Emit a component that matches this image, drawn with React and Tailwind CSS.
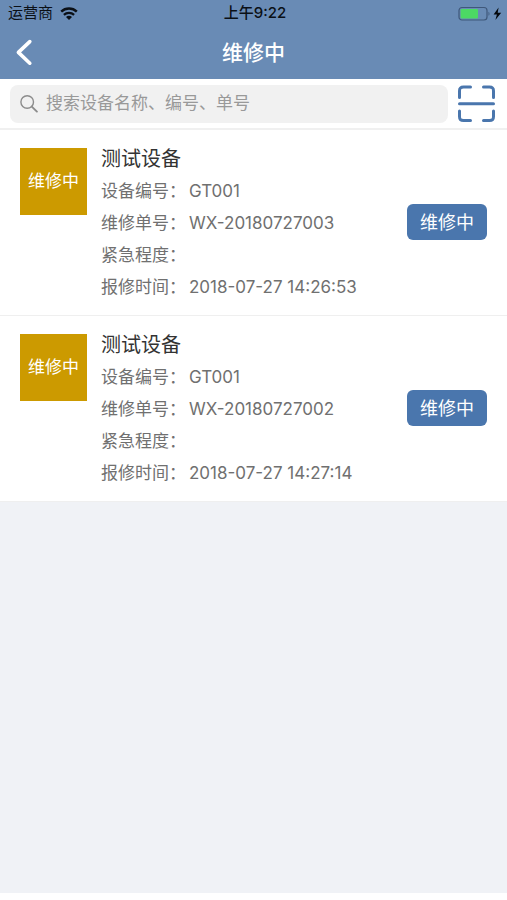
import React from 'react';

const orders = [
  { id: 'WX-20180727003', device: '测试设备', code: 'GT001', urgency: '', time: '2018-07-27 14:26:53' },
  { id: 'WX-20180727002', device: '测试设备', code: 'GT001', urgency: '', time: '2018-07-27 14:27:14' },
];

const WifiIcon = () => (
  <svg className="h-[14px] w-[18px]" viewBox="0 0 18 14" fill="none" stroke="#0b1016" aria-hidden="true">
    <path d="M1.2 4.6C5.6 0.5 12.4 0.5 16.8 4.6" strokeWidth="2.5" />
    <path d="M3.9 7.8C6.8 5.2 11.2 5.2 14.1 7.8" strokeWidth="2.3" />
    <path d="M9 13L6 9.9C7.8 8.5 10.2 8.5 12 9.9Z" fill="#0b1016" stroke="none" />
  </svg>
);

const BatteryIcon = () => (
  <svg className="h-4 w-11" viewBox="0 0 44 16" aria-hidden="true">
    <rect x="1" y="1.5" width="28" height="12.5" rx="3" fill="none" stroke="#3f587a" strokeWidth="1.2" />
    <rect x="2.6" y="3" width="17.4" height="9.5" rx="1" fill="#4cd964" />
    <path d="M30.5 5.7C31.8 6.2 31.8 9.2 30.5 9.7Z" fill="#3f587a" />
    <path d="M40.6 1.6L35.6 8.6H38.9L37.4 14L43.2 6.7H39.7Z" fill="#05080c" />
  </svg>
);

const BackIcon = () => (
  <svg className="h-7 w-5" viewBox="0 0 20 28" fill="none" aria-hidden="true">
    <path d="M15.8 2.6L4.4 13.4L15.8 24.2" stroke="#fff" strokeWidth="3.6" strokeLinecap="round" strokeLinejoin="round" />
  </svg>
);

const SearchIcon = () => (
  <svg className="h-[18px] w-[18px] shrink-0" viewBox="0 0 18 18" fill="none" stroke="#8c8c8c" strokeLinecap="round" aria-hidden="true">
    <circle cx="7.2" cy="7" r="6.3" strokeWidth="1.4" />
    <path d="M11.8 11.6L16.9 16.6" strokeWidth="1.9" />
  </svg>
);

const ScanIcon = () => (
  <svg className="h-[38px] w-[38px]" viewBox="0 0 38 38" fill="none" stroke="#4a76ad" strokeWidth="3" strokeLinecap="round" aria-hidden="true">
    <path d="M2.5 12.5V6C2.5 3 3.5 2 6.5 2H13.5" />
    <path d="M26.5 2H32.5C35.5 2 36.5 3 36.5 6V12.5" />
    <path d="M36.5 26V31.5C36.5 34.5 35.5 35.5 32.5 35.5H26.5" />
    <path d="M13.5 35.5H6.5C3.5 35.5 2.5 34.5 2.5 31.5V26" />
    <path d="M2.5 18.8H36.5" />
  </svg>
);

const Field = ({ label, value }) => (
  <div className="flex">
    <dt className="w-22 shrink-0">{label}：</dt>
    <dd>{value}</dd>
  </div>
);

const OrderItem = ({ order }) => (
  <li className="flex items-start border-b border-[#efefef] bg-white px-5 pt-[13px] pb-3">
    <div className="mt-[5px] flex size-[67px] shrink-0 items-center justify-center bg-[#cc9a00] text-[17px] text-white">
      维修中
    </div>
    <div className="ml-[14px] min-w-0 flex-1">
      <h2 className="text-[20px] leading-8 text-[#333]">{order.device}</h2>
      <dl className="text-[17px] leading-8 text-[#707070]">
        <Field label="设备编号" value={order.code} />
        <Field label="维修单号" value={order.id} />
        <Field label="紧急程度" value={order.urgency} />
        <Field label="报修时间" value={order.time} />
      </dl>
    </div>
    <button type="button" className="mb-0.5 h-9 w-20 shrink-0 self-center rounded-md bg-[#4a76ad] text-[18px] text-white">
      维修中
    </button>
  </li>
);

export default function App() {
  return (
    <div
      lang="zh-CN"
      className="flex min-h-screen flex-col bg-white pb-[7px] font-['Inter','Noto_Sans_CJK_SC',sans-serif]"
    >
      <header className="bg-[#698bb5]">
        <div className="grid h-[27px] grid-cols-3 items-center pr-[5px] pl-2 text-[15px] text-[#0b1016]">
          <div className="flex items-center gap-[7px]">
            <span>运营商</span>
            <WifiIcon />
          </div>
          <span className="text-center font-medium">上午9:22</span>
          <div className="flex justify-end">
            <BatteryIcon />
          </div>
        </div>
        <div className="grid h-[52px] grid-cols-[1fr_auto_1fr] items-center px-[14px]">
          <button type="button" aria-label="返回" className="justify-self-start">
            <BackIcon />
          </button>
          <h1 className="text-[21px] font-medium text-white">维修中</h1>
        </div>
      </header>

      <div className="flex items-center gap-[9px] border-b-2 border-[#f0f0f0] bg-white pt-[6px] pr-3 pb-[5px] pl-[10px]">
        <label className="flex h-[38px] min-w-0 flex-1 items-center gap-2 rounded-lg bg-[#f1f1f1] px-[10px]">
          <SearchIcon />
          <input
            type="text"
            aria-label="搜索"
            placeholder="搜索设备名称、编号、单号"
            className="min-w-0 flex-1 bg-transparent text-[17px] text-[#333] outline-none placeholder:text-[#999]"
          />
        </label>
        <button type="button" aria-label="扫描">
          <ScanIcon />
        </button>
      </div>

      <main className="flex-1 bg-[#f0f2f6]">
        <ul>
          {orders.map((order) => (
            <OrderItem key={order.id} order={order} />
          ))}
        </ul>
      </main>
    </div>
  );
}
